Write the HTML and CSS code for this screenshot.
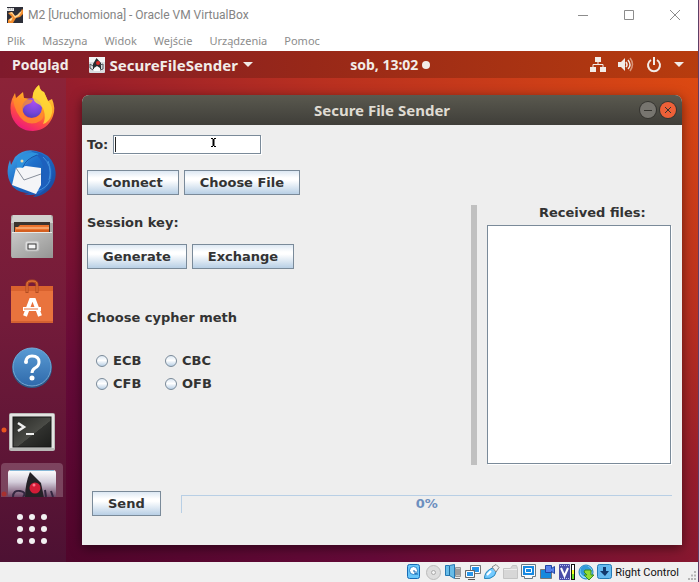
FILE: index.html
```html
<!DOCTYPE html>
<html lang="pl">
<head>
<meta charset="utf-8">
<title>M2 [Uruchomiona] - Oracle VM VirtualBox</title>
<link rel="stylesheet" href="styles.css">
</head>
<body>
<div class="vm">
  <header class="host-title">
    <svg class="app-icon" viewBox="0 0 16 16" aria-hidden="true"><rect width="16" height="16" fill="#2c2e38"/><path d="M0 1h7v3H0z" fill="#e8e8e8"/><path d="M1 2h5" stroke="#999" stroke-dasharray="1 1"/><path d="M1 6l4-1 3 4 4-1 3-6 1 1v4l-3 3-4 1-3 5H1v-3l4-3z" fill="#f08a2c"/><path d="M2 6l3 1 3 4 4-2 3-5-2 1-3 3-2 1-3-4z" fill="#ffd592"/><path d="M2 13l4-3-2 4z" fill="#fff0c0"/></svg>
    <h1 class="host-name">M2 [Uruchomiona] - Oracle VM VirtualBox</h1>
    <div class="host-controls">
      <button class="host-btn" aria-label="Minimalizuj"><svg viewBox="0 0 12 12"><path d="M1 6.500h10"/></svg></button>
      <button class="host-btn" aria-label="Maksymalizuj"><svg viewBox="0 0 12 12"><path d="M1.500 1.500h9v9h-9z"/></svg></button>
      <button class="host-btn" aria-label="Zamknij"><svg viewBox="0 0 12 12"><path d="M1 1l10 10M11 1L1 11"/></svg></button>
    </div>
  </header>
  <nav class="host-menu">
    <button>Plik</button><button>Maszyna</button><button>Widok</button><button>Wejście</button><button>Urządzenia</button><button>Pomoc</button>
  </nav>

  <main class="guest">
    <div class="topbar">
      <div class="top-left">
        <button class="top-btn">Podgląd</button>
        <button class="top-btn app-menu">
          <svg class="duke" viewBox="0 0 16 16" aria-hidden="true"><rect width="16" height="16" rx="1" fill="#d9dde0"/><path d="M0 0h16v5H0z" fill="#f3f5f6"/><path d="M7.500 1L12 6v6H4V7z" fill="#292c30"/><path d="M5 11l3-2 3 2v3H5z" fill="#fafafa"/><circle cx="9" cy="6" r="2" fill="#dd2a28"/><path d="M4 9L1 7v4l3 2M11 8l3-1v5l-3 1" fill="none" stroke="#50555a"/></svg>
          SecureFileSender
          <svg class="caret" viewBox="0 0 10 5" aria-hidden="true"><path d="M0 0h10L5 5z"/></svg>
        </button>
      </div>
      <button class="top-btn clock">sob, 13:02<span class="dot"></span></button>
      <button class="top-btn tray" aria-label="System">
        <svg width="16" height="16" viewBox="0 0 16 16"><path d="M5 0h6v5H5zM0 10h6v5H0zM10 10h6v5h-6z" fill="#f2ece8"/><path d="M8 5v3M3 10V7.500h10V10" fill="none" stroke="#f2ece8"/></svg>
        <svg width="16" height="16" viewBox="0 0 16 16"><path d="M0 5h3l4-4v13l-4-4H0z" fill="#f2ece8"/><path d="M8 5q2 3 0 5M10 3q4 5 0 9" fill="none" stroke="#f2ece8" stroke-width="1.500"/><path d="M12 1q5 6 0 13" fill="none" stroke="#d89478" stroke-width="1.500"/></svg>
        <svg width="16" height="16" viewBox="0 0 16 16"><path d="M5 3a6 6 0 1 0 6 0M8 0v8" fill="none" stroke="#f2ece8" stroke-width="2"/></svg>
        <svg class="caret" viewBox="0 0 10 5"><path d="M0 0h10L5 5z"/></svg>
      </button>
    </div>

    <div class="desktop">
      <nav class="dock">
        <div class="dock-apps">
          <button class="dock-item" aria-label="Firefox">
            <svg viewBox="0 0 62 60"><defs><linearGradient id="fx" x1=".8" y1="0" x2=".3" y2="1"><stop offset="0" stop-color="#ffe23c"/><stop offset=".45" stop-color="#ff9a25"/><stop offset=".7" stop-color="#ff4a45"/><stop offset="1" stop-color="#ec1580"/></linearGradient><radialGradient id="fp" cx=".6" cy=".2" r=".9"><stop offset="0" stop-color="#a94df0"/><stop offset=".6" stop-color="#7545d8"/><stop offset="1" stop-color="#4a3cae"/></radialGradient></defs><path d="M11 20l3-6 1 5 7-6 1 6 8 1 1-5q1-5 6-9 1 6 5 7l4 9 4-2q4 9 1 17-5 14-20 15-15 0-21-14-3-9 0-18z" fill="url(#fx)"/><circle cx="31" cy="29" r="10" fill="url(#fp)"/><path d="M12 20q5-2 11 0l9 1-2 3-5 2q-4 3-3 7 2 6 8 6 9 0 11-8 4 7-2 11-8 5-16 0-9-7-11-22z" fill="#ff9328" opacity=".75"/><path d="M32 16q1-6 6-10 1 6 5 7l4 9q5 5 4 12-2 9-9 11 3-6 1-13-1-4-4-6-8-3-7-10z" fill="#ffdc38" opacity=".8"/></svg>
          </button>
          <button class="dock-item" aria-label="Thunderbird">
            <svg viewBox="0 0 62 60"><defs><linearGradient id="tb" x1="0" y1="0" x2="1" y2="1"><stop offset="0" stop-color="#48acea"/><stop offset=".4" stop-color="#1e70cb"/><stop offset="1" stop-color="#174397"/></linearGradient></defs><path d="M14 14Q23 5 35 8q13 2 18 14 5 14-5 25-8 7-16 7l5-4Q20 52 12 44 3 32 9 17l1 5z" fill="url(#tb)"/><path d="M30 8q17 1 21 18 2 15-13 25-9 2-15 0 15-1 18-16Q46 17 30 8z" fill="#1d60bd"/><path d="M42 14q9 8 7 22M47 18q4 9 1 19M36 48q10-3 13-11" stroke="#4291dc" fill="none"/><path d="M15 25l10-2 15 2v17l-5 9-24-9z" fill="#f4f5f7"/><path d="M15 25l8 12 17-6" stroke="#888f9a" fill="none"/><path d="M16 24q-2-10 8-13 9-3 14 0-6 2-10 6-4 5-6 8z" fill="#2d91dd"/><path d="M22 24q3-8 14-12" stroke="#1854a8" fill="none"/><circle cx="21" cy="18" r="1.500" fill="#e6d9b0"/></svg>
          </button>
          <button class="dock-item" aria-label="Pliki">
            <svg viewBox="0 0 62 60"><defs><linearGradient id="cab" x2="1" y2="1"><stop stop-color="#c9c9c8"/><stop offset="1" stop-color="#949493"/></linearGradient></defs><rect x="10" y="8" width="42" height="43" rx="2" fill="#aaa9a6"/><path d="M12 8h38l2 8H10z" fill="#d1d1ce"/><path d="M13 15h36v12H13z" fill="#3b332e"/><path d="M14 20h3l2-2h29v9H14z" fill="#eb722b"/><path d="M15 21h33" stroke="#ffd1a5"/><path d="M15 24h33" stroke="#be4c17"/><path d="M11 25h40l1 26H11z" fill="url(#cab)"/><path d="M11 25.500h40" stroke="#e9e9e7"/><rect x="24" y="34" width="14" height="10" rx="2" fill="#ddd" stroke="#b7b7b7"/><rect x="27" y="37" width="8" height="5" fill="#f6f6f6" stroke="#343434"/></svg>
          </button>
          <button class="dock-item" aria-label="Oprogramowanie Ubuntu">
            <svg viewBox="0 0 62 60"><path d="M10 15h42v37H10z" fill="#e9733d"/><path d="M10 15h42v5H10z" fill="#d9622e"/><path d="M26 22v-8q0-4 5-4t5 4v8" fill="none" stroke="#b04b20" stroke-width="3"/><path d="M26 21v-8q0-3 5-3t5 3v8" fill="none" stroke="#f07b3e"/><path d="M10 51h42" stroke="#be5026"/><path d="M24 45l6-16h3l6 16M22 38h18" fill="none" stroke="#fff" stroke-width="4"/><path d="M23 38h14" stroke="#e9733d"/></svg>
          </button>
          <button class="dock-item" aria-label="Pomoc">
            <svg viewBox="0 0 62 60"><defs><linearGradient id="hp" x2="0" y2="1"><stop stop-color="#5a9bd4"/><stop offset="1" stop-color="#2f6aab"/></linearGradient></defs><circle cx="31" cy="33" r="20" fill="#2c5786"/><circle cx="31" cy="32" r="19" fill="url(#hp)" stroke="#76a9d5"/><path d="M25 27q0-6 6-6 7 0 7 6 0 4-4 6-3 2-3 5" fill="none" stroke="#fff" stroke-width="3"/><circle cx="25" cy="27" r="2" fill="#fff"/><circle cx="31" cy="43" r="2.500" fill="#fff"/></svg>
          </button>
          <button class="dock-item" aria-label="Terminal">
            <svg viewBox="0 0 62 60"><defs><linearGradient id="tm" x2="1" y2="1"><stop stop-color="#282926"/><stop offset=".55" stop-color="#4a4b46"/><stop offset=".56" stop-color="#30312e"/><stop offset="1" stop-color="#1d1e1c"/></linearGradient></defs><circle cx="3" cy="31" r="2.500" fill="#e95420"/><rect x="8" y="14" width="46" height="38" rx="2" fill="#b9b9b7"/><path d="M9 15h44v34H9z" fill="#e4e4e2"/><rect x="12" y="18" width="38" height="30" fill="url(#tm)" stroke="#161616"/><path d="M17 24l6 4-6 4" fill="none" stroke="#eee" stroke-width="2.500"/><path d="M25 35h8" stroke="#eee" stroke-width="2"/></svg>
          </button>
          <button class="dock-item active" aria-label="SecureFileSender">
            <svg viewBox="0 0 62 60"><defs><linearGradient id="jv" x2="0" y2="1"><stop stop-color="#fff"/><stop offset=".25" stop-color="#d4cedb"/><stop offset=".6" stop-color="#5d3354"/></linearGradient></defs><circle cx="3" cy="31" r="2.500" fill="#a8302f"/><rect x="7" y="7" width="48" height="48" rx="3" fill="url(#jv)"/><path d="M9 7.500h44" stroke="#86b7d6"/><path d="M29 9l11 11 3 15H24q0-14 5-26z" fill="#242126"/><circle cx="34" cy="25" r="5.500" fill="#d31c37"/><circle cx="33" cy="22" r="1.500" fill="#ff758b"/><path d="M12 34q0-7 7-6t3 6M44 27l1 7M50 28l2 6" fill="none" stroke="#33263f" stroke-width="2"/></svg>
          </button>
        </div>
        <button class="apps-grid" aria-label="Programy"><svg viewBox="0 0 32 32"><g fill="#f2f0f1"><circle cx="4" cy="4" r="3"/><circle cx="16" cy="4" r="3"/><circle cx="28" cy="4" r="3"/><circle cx="4" cy="16" r="3"/><circle cx="16" cy="16" r="3"/><circle cx="28" cy="16" r="3"/><circle cx="4" cy="28" r="3"/><circle cx="16" cy="28" r="3"/><circle cx="28" cy="28" r="3"/></g></svg></button>
      </nav>

      <div class="stage">
        <section class="window">
          <header class="win-title">
            <h2>Secure File Sender</h2>
            <div class="win-controls">
              <button class="round" aria-label="Minimize"><svg viewBox="0 0 16 16"><path d="M4 8.500h8"/></svg></button>
              <button class="round close" aria-label="Close"><svg viewBox="0 0 16 16"><path d="M5 5l6 6M11 5l-6 6"/></svg></button>
            </div>
          </header>
          <form class="app">
            <div class="panels">
              <div class="settings">
                <div class="to-row">
                  <label for="to">To:</label>
                  <div class="field"><input id="to" type="text"><svg class="ibeam" viewBox="0 0 5 9" aria-hidden="true"><path d="M0 .5h2M3 .5h2M0 8.500h2M3 8.500h2" stroke="#000"/><path d="M2.500 1v7" stroke="#000" stroke-width="2"/></svg></div>
                </div>
                <div class="btn-row connect-row"><button type="button" class="btn">Connect</button><button type="button" class="btn">Choose File</button></div>
                <h3>Session key:</h3>
                <div class="btn-row key-row"><button type="button" class="btn">Generate</button><button type="button" class="btn">Exchange</button></div>
                <fieldset class="methods">
                  <legend>Choose cypher meth</legend>
                  <div class="method-grid">
                    <label><input type="radio" name="method">ECB</label>
                    <label><input type="radio" name="method">CBC</label>
                    <label><input type="radio" name="method">CFB</label>
                    <label><input type="radio" name="method">OFB</label>
                  </div>
                </fieldset>
              </div>
              <div class="divider"></div>
              <div class="received">
                <label for="files">Received files:</label>
                <textarea id="files" readonly></textarea>
              </div>
            </div>
            <div class="send-row">
              <button type="button" class="btn">Send</button>
              <div class="progress" role="progressbar" aria-label="Progress" aria-valuenow="0" aria-valuemin="0" aria-valuemax="100">0%</div>
            </div>
          </form>
        </section>
      </div>
    </div>
  </main>

  <footer class="status">
    <svg class="status-icons" viewBox="0 0 206 18" aria-hidden="true">
      <g><rect x="1.500" y="1.500" width="12" height="14" rx="2" fill="#68c6fa" stroke="#176bb5"/><circle cx="7.500" cy="7.500" r="4" fill="#fff" stroke="#2382cc"/><path d="M7 8h2v3h3" fill="none" stroke="#1565ae"/></g>
      <g><circle cx="27.500" cy="9.500" r="7" fill="#ddd" stroke="#bcbcbc"/><circle cx="27.500" cy="9.500" r="2" fill="#f2f2f2" stroke="#aaa"/></g>
      <g><path d="M39.500 2.500h4l5-1v14l-5-3h-4z" fill="#68bce8" stroke="#2578b4"/><path d="M43.500 3v10" stroke="#246f9f"/><path d="M49.500 4.500h5v9h-5z" fill="#c8c8c8" stroke="#999"/><path d="M50 7h4M50 9h4M50 11h4M49 15.500h5" stroke="#777"/></g>
      <g><path d="M64.500 2.500h10v8h-10z" fill="#2896ea" stroke="#777"/><path d="M65.500 3.500h8v6h-8z" fill="none" stroke="#fff"/><path d="M59.500 7.500h9v7h-9z" fill="#2896ea" stroke="#666"/><path d="M60.500 8.500h7v5h-7z" fill="none" stroke="#fff"/><path d="M62 16.500h7" stroke="#555"/></g>
      <g><path d="M78.500 15.500q0-6 5-9l4-2 3 3-2 5q-4 4-10 3z" fill="#73caff" stroke="#2283ba"/><path d="M86 4l4-2.500 3 3L90 9z" fill="#eee" stroke="#888"/><path d="M81 12l4-4" stroke="#fff" stroke-width="2"/></g>
      <g><path d="M97.500 5.500h7l2-3h4l1 3v10h-14z" fill="#d7d7d7" stroke="#c4c4c4"/><path d="M98 6.500h13" stroke="#eee"/></g>
      <g><path d="M115.500 1.500h14v12h-3v2h-8v-2h-3z" fill="#fafafa" stroke="#687984"/><path d="M117 3h11v9h-11z" fill="#1689e2"/><path d="M119.500 5.500h6v4h-6z" fill="#178be5" stroke="#fff"/></g>
      <g><path d="M134.500 6.500h11v9h-11z" fill="#1689dd" stroke="#777"/><path d="M139.500 2.500h6v3l3-2v7l-3-2v1h-6z" fill="#5681ea" stroke="#2044a3"/></g>
      <g><rect x="153" y="1" width="11" height="16" rx="1" fill="#494ea9"/><path d="M154 2.500h9M154 15.500h9" stroke="#b8bcf7" stroke-dasharray="1 1"/><path d="M155 5l3.500 8L162 5" fill="none" stroke="#fff" stroke-width="2"/><path d="M165 1h4v16h-4z" fill="#111"/><path d="M166 2h2v5h-2z" fill="#fff"/><path d="M166 7h2v4h-2z" fill="#f7ff24"/><path d="M166 11h2v5h-2z" fill="#69dd25"/></g>
      <g><circle cx="180" cy="9" r="7" fill="#8fdcff" stroke="#187cbd"/><path d="M177 3q-5 4-1 9 5 5 10-4-4-7-9-5z" fill="#329bda"/><path d="M179 7h6v5h3l-5 5-5-5h3l-3-3z" fill="#91db33" stroke="#398c23"/></g>
      <g><rect x="191.500" y="1.500" width="14" height="14" rx="2" fill="#65baf0" stroke="#247bb6"/><path d="M197 4h3v4h3l-4 5-5-5h3z" fill="#12396d"/></g>
    </svg>
    <span class="host-key">Right Control</span>
    <svg class="grip" viewBox="0 0 10 10" aria-hidden="true"><path d="M7 1h2M4 4.500h2M7 4.500h2M1 8h2M4 8h2M7 8h2" stroke="#b5b5b5" stroke-width="2"/></svg>
  </footer>
</div>
</body>
</html>
```
FILE: styles.css
```css
* { box-sizing: border-box; }
body { margin: 0; background: #fff; }
button { border: 0; background: none; padding: 0; margin: 0; font: inherit; color: inherit; }
svg { display: block; }
h1, h2, h3 { margin: 0; font-size: inherit; }

.vm { display: flex; flex-direction: column; min-height: 100vh; border-right: 1px solid #5c3e68; font-family: "Noto Sans", sans-serif; }

.host-title { flex: none; display: flex; align-items: center; height: 30px; padding-left: 7px; background: #fff; color: #848484; }
.app-icon { width: 16px; height: 16px; margin-right: 5px; }
.host-name { flex: 1; font: 400 12px Roboto, sans-serif; }
.host-controls { display: flex; }
.host-btn { display: grid; place-items: center; width: 46px; height: 30px; }
.host-btn svg { width: 12px; height: 12px; fill: none; stroke: #8c8c8c; }
.host-menu { flex: none; display: flex; gap: 17px; align-items: center; height: 21px; padding-left: 7px; color: #8c8c8c; font-size: 11px; }

.guest { flex: 1; display: flex; flex-direction: column; background: linear-gradient(32deg, #4b0428 0%, #650a38 25%, #961d2c 55%, #b93020 72%, #e04c10 100%); }
.topbar { display: grid; grid-template-columns: 4fr auto 3fr; align-items: center; height: 27px; padding: 0 14px 0 12px; background: linear-gradient(90deg, #7f1a2c, #982818 45%, #b73c0e); color: #f2ece8; font-weight: 700; font-size: 14px; }
.top-left { display: flex; gap: 20px; }
.top-btn { display: flex; align-items: center; }
.app-menu { gap: 5px; font-size: 15px; line-height: 20px; }
.duke { width: 16px; height: 16px; }
.caret { width: 10px; height: 5px; fill: #f2ece8; }
.clock { gap: 4px; }
.dot { width: 8px; height: 8px; border-radius: 50%; background: #f2ece8; }
.tray { justify-self: end; gap: 12px; }

.desktop { flex: 1; display: flex; }
.dock { display: flex; flex-direction: column; width: 66px; padding: 1px; background: linear-gradient(#8c2338, #731b3a 50%, #4d1133); }
.dock-apps { display: flex; flex-direction: column; gap: 4px; height: 418px; overflow: hidden; }
.dock-item { flex: none; width: 62px; height: 60px; border-radius: 4px; }
.dock-item.active { background: rgba(255, 255, 255, 0.2); }
.apps-grid { width: 62px; height: 64px; display: grid; place-items: center; }
.apps-grid svg { width: 32px; height: 32px; }

.stage { flex: 1; display: flex; padding: 17px 16px; }
.window { flex: 1; display: flex; flex-direction: column; border-radius: 7px 7px 0 0; box-shadow: 0 3px 12px rgba(0, 0, 0, 0.5); background: #eee; }
.win-title { display: grid; grid-template-columns: 1fr auto 1fr; align-items: center; height: 30px; padding: 0 6px; border-radius: 7px 7px 0 0; background: linear-gradient(#5a594f, #3f3e39); color: #dfdbd2; }
.win-title h2 { grid-column: 2; font-size: 15px; line-height: 20px; }
.win-controls { display: flex; gap: 4px; justify-self: end; }
.round { width: 16px; height: 16px; border-radius: 50%; background: #77756f; box-shadow: 0 0 0 1px #353430; }
.round.close { background: #ed6038; }
.round svg { fill: none; stroke: #34332e; }

.app { flex: 1; display: flex; flex-direction: column; padding: 10px; color: #333; font: 700 13px/16px "DejaVu Sans", sans-serif; }
.panels { display: flex; gap: 10px; }
.settings { flex: 1; margin-left: -5px; }
.to-row { display: flex; align-items: center; gap: 5px; }
.field { position: relative; width: 148px; }
.field input { display: block; width: 100%; height: 19px; padding: 0 2px; border: 1px solid #7a8a99; border-radius: 0; background: #fff; box-shadow: 1px 1px #fff; outline: 0; font: inherit; }
.field::before { content: ""; position: absolute; left: 2px; top: 2px; width: 1px; height: 15px; background: #222; }
.ibeam { position: absolute; left: 98px; top: 3px; width: 5px; height: 9px; }
.btn-row { display: flex; gap: 5px; }
.btn { height: 25px; padding: 0 15px; border: 1px solid #7a8a99; background: linear-gradient(#dde8f3, #fff 30%, #fff 40%, #b8cfe5); }
.connect-row { margin: 16px 0 20px; }
.key-row { margin: 13px 0 41px; }
.methods { border: 0; padding: 0; margin: 0; }
.methods legend { padding: 0; }
.method-grid { display: grid; grid-template-columns: 69px 69px; gap: 7px 0; padding: 27px 0 0 9px; }
.method-grid label { display: flex; align-items: center; gap: 5px; }
.method-grid input { appearance: none; width: 12px; height: 12px; margin: 0; border: 1px solid #7a8a99; border-radius: 50%; background: linear-gradient(#dde8f3, #fff 45%, #b8cfe5); }
.divider { width: 6px; margin-top: 70px; background: #c0c0c0; }
.received { display: flex; flex-direction: column; width: 184px; height: 330px; padding: 70px 0 1px; margin-right: 1px; }
.received label { padding-left: 52px; margin-bottom: 4px; }
.received textarea { flex: 1; width: 100%; margin: 0; padding: 2px; border: 1px solid #7a8a99; border-radius: 0; background: #fff; box-shadow: 1px 1px #fff; outline: 0; resize: none; }
.send-row { display: flex; gap: 20px; align-items: center; margin-top: 26px; }
.progress { flex: 1; height: 18px; border: solid #b8cfe5; border-width: 1px 0 0 1px; color: #6c8fbe; text-align: center; }

.status { flex: none; display: flex; align-items: center; height: 20px; background: #f0f0f0; color: #111; font: 11px Roboto, sans-serif; }
.status-icons { width: 206px; height: 18px; margin-left: auto; }
.host-key { margin-left: 3px; }
.grip { width: 10px; height: 10px; margin: 8px 1px 0 8px; }
```
